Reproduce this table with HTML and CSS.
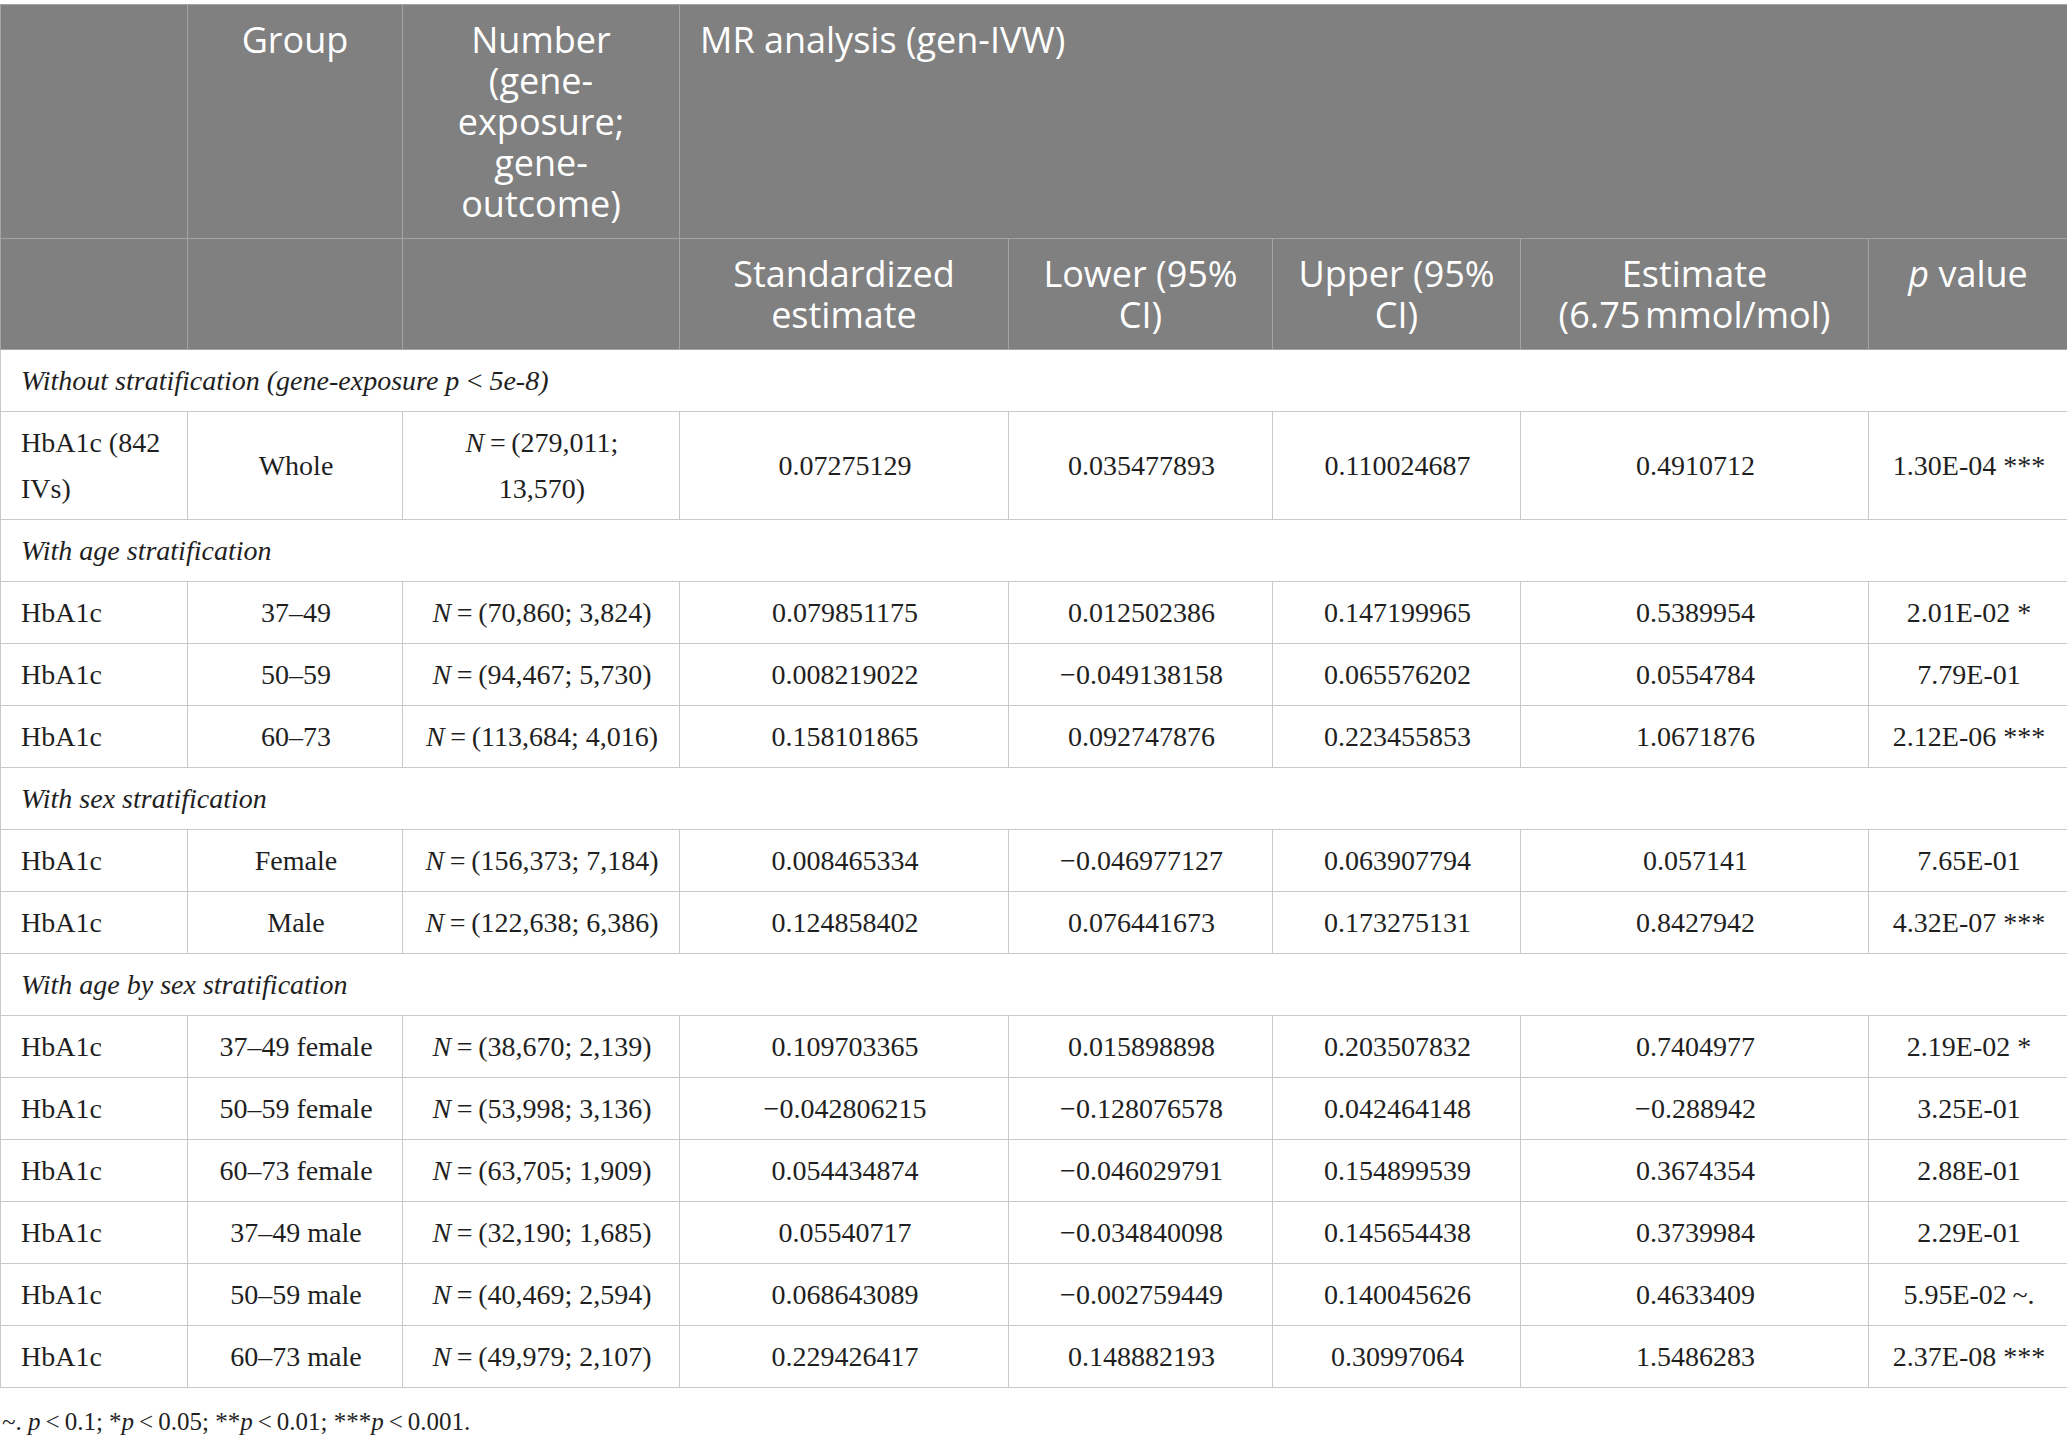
FILE: index.html
```html
<!DOCTYPE html>
<html lang="en">
<head>
  <meta charset="UTF-8">
  <title>MR analysis table</title>
  <link rel="stylesheet" href="styles.css">
</head>
<body>
  <table class="mr-table">
    <colgroup>
      <col class="c-trait">
      <col class="c-group">
      <col class="c-number">
      <col class="c-std">
      <col class="c-lower">
      <col class="c-upper">
      <col class="c-est">
      <col class="c-p">
    </colgroup>
    <thead>
      <tr>
        <th></th>
        <th>Group</th>
        <th>Number (gene-exposure; gene-outcome)</th>
        <th colspan="5" class="span-head">MR analysis (gen-IVW)</th>
      </tr>
      <tr>
        <th></th>
        <th></th>
        <th></th>
        <th>Standardized estimate</th>
        <th>Lower (95% CI)</th>
        <th>Upper (95% CI)</th>
        <th>Estimate (6.75&#8239;mmol/mol)</th>
        <th><i>p</i> value</th>
      </tr>
    </thead>
    <tbody>
      <tr class="group-row"><td colspan="8">Without stratification (gene-exposure p&#8201;&lt;&#8201;5e-8)</td></tr>
      <tr>
        <td>HbA1c (842 IVs)</td><td>Whole</td><td><i>N</i>&#8201;=&#8201;(279,011; 13,570)</td>
        <td>0.07275129</td><td>0.035477893</td><td>0.110024687</td><td>0.4910712</td><td>1.30E-04 ***</td>
      </tr>

      <tr class="group-row"><td colspan="8">With age stratification</td></tr>
      <tr>
        <td>HbA1c</td><td>37–49</td><td><i>N</i>&#8201;=&#8201;(70,860; 3,824)</td>
        <td>0.079851175</td><td>0.012502386</td><td>0.147199965</td><td>0.5389954</td><td>2.01E-02 *</td>
      </tr>
      <tr>
        <td>HbA1c</td><td>50–59</td><td><i>N</i>&#8201;=&#8201;(94,467; 5,730)</td>
        <td>0.008219022</td><td>−0.049138158</td><td>0.065576202</td><td>0.0554784</td><td>7.79E-01</td>
      </tr>
      <tr>
        <td>HbA1c</td><td>60–73</td><td><i>N</i>&#8201;=&#8201;(113,684; 4,016)</td>
        <td>0.158101865</td><td>0.092747876</td><td>0.223455853</td><td>1.0671876</td><td>2.12E-06 ***</td>
      </tr>

      <tr class="group-row"><td colspan="8">With sex stratification</td></tr>
      <tr>
        <td>HbA1c</td><td>Female</td><td><i>N</i>&#8201;=&#8201;(156,373; 7,184)</td>
        <td>0.008465334</td><td>−0.046977127</td><td>0.063907794</td><td>0.057141</td><td>7.65E-01</td>
      </tr>
      <tr>
        <td>HbA1c</td><td>Male</td><td><i>N</i>&#8201;=&#8201;(122,638; 6,386)</td>
        <td>0.124858402</td><td>0.076441673</td><td>0.173275131</td><td>0.8427942</td><td>4.32E-07 ***</td>
      </tr>

      <tr class="group-row"><td colspan="8">With age by sex stratification</td></tr>
      <tr>
        <td>HbA1c</td><td>37–49 female</td><td><i>N</i>&#8201;=&#8201;(38,670; 2,139)</td>
        <td>0.109703365</td><td>0.015898898</td><td>0.203507832</td><td>0.7404977</td><td>2.19E-02 *</td>
      </tr>
      <tr>
        <td>HbA1c</td><td>50–59 female</td><td><i>N</i>&#8201;=&#8201;(53,998; 3,136)</td>
        <td>−0.042806215</td><td>−0.128076578</td><td>0.042464148</td><td>−0.288942</td><td>3.25E-01</td>
      </tr>
      <tr>
        <td>HbA1c</td><td>60–73 female</td><td><i>N</i>&#8201;=&#8201;(63,705; 1,909)</td>
        <td>0.054434874</td><td>−0.046029791</td><td>0.154899539</td><td>0.3674354</td><td>2.88E-01</td>
      </tr>
      <tr>
        <td>HbA1c</td><td>37–49 male</td><td><i>N</i>&#8201;=&#8201;(32,190; 1,685)</td>
        <td>0.05540717</td><td>−0.034840098</td><td>0.145654438</td><td>0.3739984</td><td>2.29E-01</td>
      </tr>
      <tr>
        <td>HbA1c</td><td>50–59 male</td><td><i>N</i>&#8201;=&#8201;(40,469; 2,594)</td>
        <td>0.068643089</td><td>−0.002759449</td><td>0.140045626</td><td>0.4633409</td><td>5.95E-02&#8201;~.</td>
      </tr>
      <tr>
        <td>HbA1c</td><td>60–73 male</td><td><i>N</i>&#8201;=&#8201;(49,979; 2,107)</td>
        <td>0.229426417</td><td>0.148882193</td><td>0.30997064</td><td>1.5486283</td><td>2.37E-08 ***</td>
      </tr>
    </tbody>
  </table>

  <p class="footnote">~. <i>p</i>&#8201;&lt;&#8201;0.1; *<i>p</i>&#8201;&lt;&#8201;0.05; **<i>p</i>&#8201;&lt;&#8201;0.01; ***<i>p</i>&#8201;&lt;&#8201;0.001.</p>
</body>
</html>
```

FILE: styles.css
```css
body {
  margin: 0;
  padding-top: 4px;
  background: #fff;
  color: #1f1f1f;
  font-family: "Liberation Serif", "Times New Roman", serif;
}

.mr-table {
  width: 2067px;
  table-layout: fixed;
  border-collapse: collapse;
  font-size: 28px;
}

.c-trait { width: 187px; }
.c-group { width: 215px; }
.c-number { width: 277px; }
.c-std { width: 329px; }
.c-lower { width: 264px; }
.c-upper { width: 248px; }
.c-est { width: 348px; }
.c-p { width: 199px; }

.mr-table th {
  background: #7f807f;
  color: #fff;
  font-family: "Open Sans", "Liberation Sans", sans-serif;
  font-size: 36px;
  font-weight: 400;
  line-height: 41px;
  padding: 14px 18px;
  text-align: center;
  vertical-align: top;
  border: 1px solid #a3a4a3;
}

.mr-table th.span-head {
  text-align: left;
  padding-left: 20px;
}

.mr-table td {
  padding: 8px 18px 7px 20px;
  line-height: 46px;
  text-align: center;
  vertical-align: middle;
  border: 1px solid #c9c9c9;
}

.mr-table td:first-child {
  text-align: left;
}

.group-row td {
  font-style: italic;
}

.footnote {
  margin: 0;
  padding: 11px 0 0 2px;
  font-size: 25px;
  line-height: 46px;
}
```
